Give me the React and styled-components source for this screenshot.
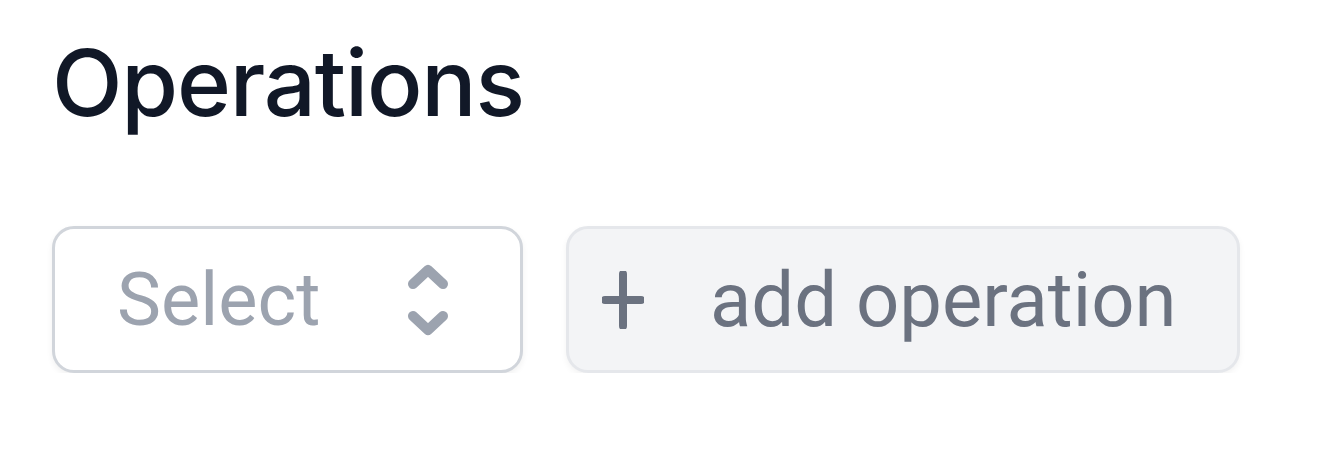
import React from "react";
import styled, { createGlobalStyle } from "styled-components";

const GlobalStyle = createGlobalStyle`
  body {
    margin: 0;
    background: #ffffff;
    font-family: Inter, "Noto Sans", sans-serif;
  }
`;

const Page = styled.div`
  padding: 27px 0 0 52px;
`;

const Title = styled.h2`
  margin: 0;
  font-size: 92px;
  font-weight: 500;
  line-height: 112px;
  color: #111827;
  letter-spacing: -1.2px;
`;

const Row = styled.div`
  display: flex;
  gap: 43px;
  margin-top: 87px;
`;

const SelectBox = styled.div`
  box-sizing: border-box;
  width: 471px;
  height: 147px;
  border: 3px solid #d1d5db;
  border-radius: 22px;
  background: #ffffff;
  box-shadow: 0 3px 6px rgba(0, 0, 0, 0.06);
  display: flex;
  align-items: center;
  justify-content: space-between;
  padding: 0 71px 0 62px;
  font-family: Roboto, "Liberation Sans", sans-serif;
`;

const Placeholder = styled.span`
  font-size: 74px;
  font-weight: 400;
  color: #9ca3af;
`;

const AddButton = styled.button`
  box-sizing: border-box;
  width: 674px;
  height: 147px;
  border: 3px solid #e5e7eb;
  border-radius: 22px;
  background: #f3f4f6;
  box-shadow: 0 3px 6px rgba(0, 0, 0, 0.05);
  display: flex;
  align-items: center;
  gap: 66px;
  padding: 0 0 0 33px;
  font-family: Roboto, "Liberation Sans", sans-serif;
  font-size: 76px;
  font-weight: 400;
  color: #6b7280;
`;

const Chevrons = () => (
  <svg width="42" height="72" viewBox="0 0 42 72" fill="none">
    <path
      d="M6 20 L21 6 L36 20 M6 52 L21 66 L36 52"
      stroke="#9ca3af"
      strokeWidth="10"
      strokeLinecap="round"
      strokeLinejoin="round"
    />
  </svg>
);

const Plus = () => (
  <svg width="42" height="58" viewBox="0 0 42 58" fill="none">
    <path
      d="M21 3 V55 M3 29 H39"
      stroke="#6b7280"
      strokeWidth="8"
      strokeLinecap="round"
    />
  </svg>
);

export default function App() {
  return (
    <>
      <GlobalStyle />
      <Page>
        <Title>Operations</Title>
        <Row>
          <SelectBox>
            <Placeholder>Select</Placeholder>
            <Chevrons />
          </SelectBox>
          <AddButton>
            <Plus />
            add operation
          </AddButton>
        </Row>
      </Page>
    </>
  );
}
